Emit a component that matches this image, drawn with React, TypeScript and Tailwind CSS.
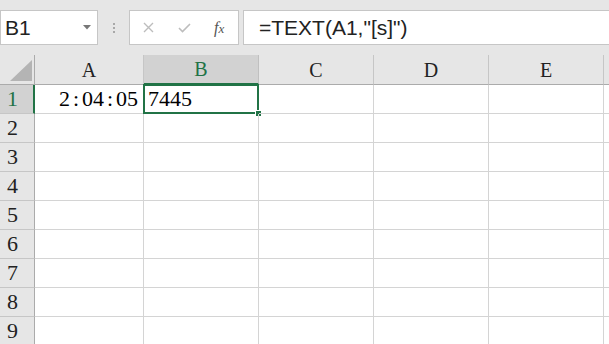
import React from "react";

const cols = [
  { l: "A", w: "w-[109px]" },
  { l: "B", w: "w-[115px]" },
  { l: "C", w: "w-[115px]" },
  { l: "D", w: "w-[115px]" },
  { l: "E", w: "w-[115px]" },
  { l: "", w: "w-[115px]" },
];

const serif = { fontFamily: '"Liberation Serif", "Times New Roman", serif' };
const sans = { fontFamily: '"Liberation Sans", Arial, sans-serif' };

function Colon() {
  return <span className="inline-block w-[12px] text-center">:</span>;
}

export default function App() {
  const rows = [1, 2, 3, 4, 5, 6, 7, 8, 9];
  return (
    <div className="w-[609px] h-[344px] overflow-hidden bg-white">
      {/* toolbar */}
      <div className="h-[55px] bg-[#e6e6e6] flex items-start pt-[10px]">
        <div className="w-[98px] h-[35px] bg-white border border-[#c6c6c6] flex items-center justify-between pl-[4px] pr-[6px]">
          <span className="text-[21px] text-[#222] leading-none" style={sans}>B1</span>
          <svg width="8" height="5" viewBox="0 0 8 5"><path d="M0 0 H8 L4 4.5 Z" fill="#777" /></svg>
        </div>
        <div className="w-[31px] h-[35px] flex flex-col items-center justify-center gap-[2px] pl-[1px]">
          <div className="w-[2px] h-[2px] bg-[#a8a8a8]" />
          <div className="w-[2px] h-[2px] bg-[#a8a8a8]" />
          <div className="w-[2px] h-[2px] bg-[#a8a8a8]" />
        </div>
        <div className="w-[110px] h-[35px] bg-white border border-[#c6c6c6] flex items-center">
          <svg className="ml-[13px]" width="11" height="11" viewBox="0 0 11 11">
            <path d="M1 1 L10 10 M10 1 L1 10" stroke="#bdbdbd" strokeWidth="1.4" />
          </svg>
          <svg className="ml-[24px]" width="13" height="10" viewBox="0 0 13 10">
            <path d="M1 5 L4.5 8.5 L12 1" stroke="#bdbdbd" strokeWidth="1.6" fill="none" />
          </svg>
          <span className="ml-[23px] text-[16px] italic text-[#555] leading-none" style={serif}>
            f<span className="text-[13px]">x</span>
          </span>
        </div>
        <div className="ml-[4px] flex-1 h-[35px] bg-white border border-[#c6c6c6] border-r-0 flex items-center pl-[15px]">
          <span className="text-[21px] text-[#222] leading-none" style={sans}>=TEXT(A1,"[s]")</span>
        </div>
      </div>

      {/* column headers */}
      <div className="flex h-[30px]">
        <div className="w-[35px] shrink-0 bg-[#e6e6e6] border-r border-b border-[#ababab] flex items-end justify-end pr-[2px] pb-[3px]">
          <svg width="22" height="21" viewBox="0 0 22 21"><path d="M22 0 V21 H0 Z" fill="#b4b4b4" /></svg>
        </div>
        {cols.map((c, i) => (
          <div
            key={i}
            className={`${c.w} shrink-0 flex items-center justify-center text-[20px] ${
              i === 1
                ? "bg-[#d2d2d2] text-[#217346] border-r border-r-[#c0c0c0] border-b-2 border-b-[#217346]"
                : "bg-[#e6e6e6] text-[#222] border-r border-r-[#c6c6c6] border-b border-b-[#ababab]"
            }`}
            style={serif}
          >
            {c.l}
          </div>
        ))}
      </div>

      {/* rows */}
      {rows.map((r) => (
        <div key={r} className="flex h-[29px]">
          <div
            className={`w-[35px] shrink-0 border-b border-[#c6c6c6] flex items-center pl-[7px] text-[22px] leading-none ${
              r === 1
                ? "bg-[#d2d2d2] text-[#217346] border-r-2 border-r-[#217346]"
                : "bg-[#e6e6e6] text-[#222] border-r border-r-[#ababab]"
            }`}
            style={serif}
          >
            {r}
          </div>
          {cols.map((c, i) => (
            <div
              key={i}
              className={`${c.w} shrink-0 border-r border-b border-[#d4d4d4] relative flex items-center text-[22px] text-black leading-none ${
                i === 0 ? "justify-end pr-[5px]" : "pl-[4px]"
              }`}
              style={serif}
            >
              {r === 1 && i === 0 && (
                <span>
                  2<Colon />04<Colon />05
                </span>
              )}
              {r === 1 && i === 1 && (
                <>
                  7445
                  <div className="absolute -left-[1px] -top-[1px] w-[116px] h-[30px] border-2 border-[#217346]" />
                  <div className="absolute left-[111px] top-[25px] w-[7px] h-[7px] bg-[#217346] border border-white" />
                </>
              )}
            </div>
          ))}
        </div>
      ))}
    </div>
  );
}
